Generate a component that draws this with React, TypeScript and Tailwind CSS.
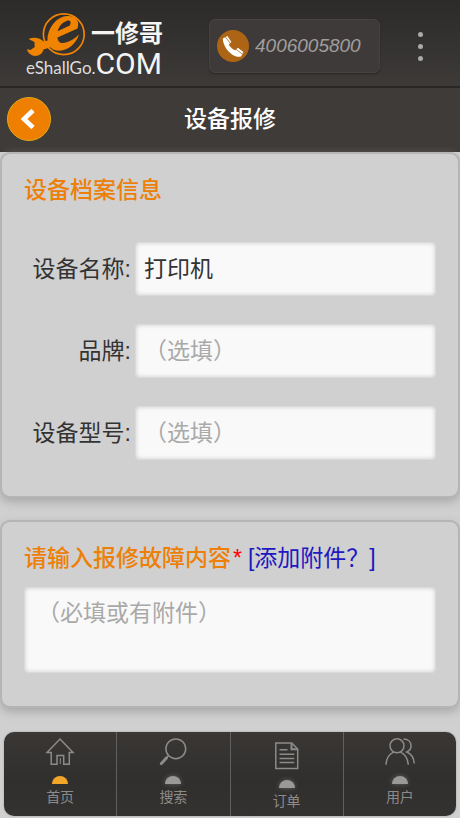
import type { ReactNode } from "react";

function Emblem() {
  return (
    <svg viewBox="26 12 60 46" className="h-[46px] w-[60px] shrink-0" aria-hidden="true">
      <circle cx="63.8" cy="34.3" r="20.4" fill="none" stroke="#f08300" strokeWidth="1.7" />
      <path
        fillRule="evenodd"
        d="M47.5 39C48 28 56 17 67 16C76 15.5 80 21 77.5 28.5L57.5 37.5C57.5 42 61 44 66 42.5C70.5 41.3 75 38.3 79 34.5C76.5 43 68.5 50.5 59.5 50.8C52 50.8 47.5 46 47.5 39ZM57.5 31.2L69.8 25.6C71.8 21.4 69.8 19.8 66.5 21C62 22.6 59 26 57.5 31.2Z"
        fill="#f08300"
      />
      <path
        d="M49 40.2L43.5 41.5C40.5 38 34 36.5 28.5 39L34.5 42L34.7 47L30.5 50L27 49.2C28 54 33 57 38 55.5C41.5 54.5 43 51.8 43.5 49.5L52 46.8Z"
        fill="#f08300"
      />
    </svg>
  );
}

function PhoneIcon() {
  return (
    <svg viewBox="0 0 32 32" className="size-8 shrink-0" aria-hidden="true">
      <circle cx="16" cy="16" r="16" fill="#ad6515" />
      <path
        d="M5.8 8.6L10.4 6L14.4 12L11.8 14.4C13 17 15.8 19.4 18.4 20.2L20.8 17.8L26.4 22L24.2 26.2C22.4 27.4 18.6 26.8 15 24.4C10.4 21.4 6 15 5.8 8.6Z"
        fill="#fff"
      />
      <path d="M8.2 6.8L13.4 13.4M19.2 19.4L25.6 24.4" stroke="#ad6515" strokeWidth="0.8" />
    </svg>
  );
}

const line = { fill: "none", stroke: "#8d8b89", strokeWidth: 1.5 } as const;

const homeIcon = (
  <svg viewBox="0 0 30 30" className="size-[30px]" {...line} aria-hidden="true">
    <path d="M15 2L28 15.5H24.3V27.3H18.7V18.5H12V27.3H6.2V15.5H2Z" />
    <path d="M15.3 21V27" strokeWidth="1" />
  </svg>
);
const searchIcon = (
  <svg viewBox="0 0 30 30" className="size-[30px]" {...line} aria-hidden="true">
    <circle cx="17.8" cy="11.8" r="9.9" />
    <path d="M10.4 18.8L8.6 20.6" />
    <path d="M8.4 21L3.4 26.6" strokeWidth="3" strokeLinecap="round" />
  </svg>
);
const orderIcon = (
  <svg viewBox="0 0 30 30" className="size-[30px]" {...line} aria-hidden="true">
    <path d="M3.8 2H19.8L25.7 8V27.6H3.8Z" />
    <path d="M19.5 2.4V8.3H25.5" strokeWidth="2" />
    <path d="M7.5 8.8H15.5M7.5 13.2H22.3M7.5 17.4H22.3M7.5 21.6H22.3" />
  </svg>
);
const userIcon = (
  <svg viewBox="0 0 30 30" className="size-[30px]" {...line} aria-hidden="true">
    <circle cx="12" cy="8.8" r="7" />
    <path d="M1 27.7C1.4 21.2 4.4 16.8 8.6 15.1M15.4 15.1C19.8 17 22.8 21.2 23.2 27.7" />
    <path d="M18.5 2C23.4 2 26 5.2 26 8.8C26 11.8 24.2 14 21.8 15C26.4 17 29 21 29.2 26.5" />
  </svg>
);

const tabs: { label: string; icon: ReactNode; active?: boolean; spacing: string }[] = [
  { label: "首页", icon: homeIcon, active: true, spacing: "pt-[5px]" },
  { label: "搜索", icon: searchIcon, spacing: "pt-[5px]" },
  { label: "订单", icon: orderIcon, spacing: "pt-[9px]" },
  { label: "用户", icon: userIcon, spacing: "pt-[5px]" },
];

const fieldStyle =
  "min-w-0 rounded-[5px] border border-[#dadada] bg-[#f9f9f9] font-['Noto_Sans_CJK_SC',sans-serif] text-[#333] shadow-[0_0_1px_#d8d8d8,inset_0_0_4px_#ccc] outline-none placeholder:text-[#a9a9a9] placeholder:opacity-100";

const cardStyle =
  "rounded-[10px] border-2 border-[#b5b5b5] bg-[#d0d0d0] px-[22px] pt-[19px] shadow-[0_4px_10px_#a8a8a8]";

function Field({ id, label, value, placeholder }: { id: string; label: string; value?: string; placeholder?: string }) {
  return (
    <div className="flex items-center gap-1">
      <label htmlFor={id} className="w-[107px] shrink-0 text-right text-[#333]">
        {label}:
      </label>
      <input
        id={id}
        type="text"
        defaultValue={value}
        placeholder={placeholder}
        className={`h-[54px] flex-1 px-2 pb-1 ${fieldStyle}`}
      />
    </div>
  );
}

export default function App() {
  return (
    <div
      lang="zh-CN"
      className="flex min-h-screen flex-col bg-[#d0d0d0] font-['Liberation_Sans','Noto_Sans_CJK_SC',sans-serif] text-[23px] leading-[34px]"
    >
      <header className="flex h-[88px] items-center border-b-2 border-[#292725] bg-linear-to-b from-[#2c2b2a] to-[#3d3a38] pt-[6px] pr-[30px] pl-[26px]">
        <div className="flex h-[68px] w-[142px] flex-col whitespace-nowrap text-[#f4f4f4]">
          <div className="flex h-[38px] items-start gap-[5px]">
            <Emblem />
            <span className="pt-[10px] text-[24px] leading-6 font-bold">一修哥</span>
          </div>
          <div className="flex h-7 items-baseline leading-7">
            <span className="font-['Lato',sans-serif] text-[17px] text-[#ddd]">eShallGo.</span>
            <span className="font-['Roboto',sans-serif] text-[30px]">COM</span>
          </div>
        </div>
        <a
          href="tel:4006005800"
          className="ml-auto flex h-[54px] w-[171px] items-center gap-[6px] rounded-[6px] border border-[#454341] bg-[#3d3a39] pl-[7px] text-[19px] text-[#a19d9b] italic shadow-[0_1px_2px_#292725]"
        >
          <PhoneIcon />
          4006005800
        </a>
        <button type="button" aria-label="更多" className="ml-[30px] flex h-10 w-5 flex-col items-center justify-center gap-[7px]">
          <span className="size-[5px] rounded-full bg-[#aaa]" />
          <span className="size-[5px] rounded-full bg-[#aaa]" />
          <span className="size-[5px] rounded-full bg-[#aaa]" />
        </button>
      </header>

      <div className="grid h-16 grid-cols-[44px_1fr_44px] items-center border-b-2 border-[#383533] bg-[#3f3b39] px-[7px]">
        <button
          type="button"
          aria-label="返回"
          className="flex size-11 items-center justify-center rounded-full border border-[#e5a812] bg-[#ef7f00]"
        >
          <svg viewBox="0 0 20 22" className="h-[22px] w-5" fill="none" stroke="#fff" strokeWidth="4.6" aria-hidden="true">
            <path d="M14 2.5L5 11L14 19.5" />
          </svg>
        </button>
        <h1 className="text-center font-medium text-white">设备报修</h1>
      </div>

      <form className="flex flex-col gap-[22px]">
        <section className={`${cardStyle} pb-9`}>
          <h2 className="font-medium text-[#ec8009]">设备档案信息</h2>
          <div className="mt-[35px] flex flex-col gap-7">
            <Field id="name" label="设备名称" value="打印机" />
            <Field id="brand" label="品牌" placeholder="（选填）" />
            <Field id="model" label="设备型号" placeholder="（选填）" />
          </div>
        </section>

        <section className={`${cardStyle} pb-[33px]`}>
          <div className="flex whitespace-nowrap">
            <label htmlFor="fault" className="font-medium text-[#ec8009]">
              请输入报修故障内容
            </label>
            <span className="ml-[2px] text-[#f00]">*</span>
            <a href="#attachment" className="ml-[6px] text-[#2018c0]">
              [添加附件？]
            </a>
          </div>
          <textarea
            id="fault"
            placeholder="（必填或有附件）"
            className={`mt-3 block h-[86px] w-full resize-none px-3 pt-[6px] ${fieldStyle}`}
          />
        </section>
      </form>

      <nav className="mx-1 mt-6 mb-[2px] flex h-[84px] overflow-hidden rounded-[10px] bg-linear-to-b from-[#3a3735] from-0% via-[#302f2d] via-60% to-[#343230] shadow-[0_0_2px_#999]">
        {tabs.map((tab) => (
          <a
            key={tab.label}
            href={`#${tab.label}`}
            className={`flex flex-1 flex-col items-center border-r border-[#62605e] text-[14px] leading-5 text-[#8d8b89] last:border-r-0 ${tab.spacing}`}
          >
            {tab.icon}
            <span className={`mt-[9px] h-2 w-4 rounded-t-full ${tab.active ? "bg-[#f3a52a]" : "bg-[#9b9997] shadow-[0_0_5px_#666]"}`} />
            <span className="mt-[3px]">{tab.label}</span>
          </a>
        ))}
      </nav>
    </div>
  );
}
